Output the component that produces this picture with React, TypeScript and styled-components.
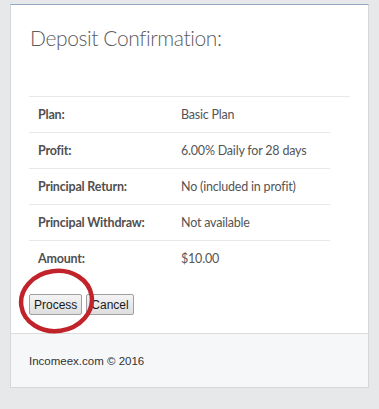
import React from 'react';
import styled, { createGlobalStyle } from 'styled-components';

const GlobalStyle = createGlobalStyle`
	html, body {
		margin: 0;
		padding: 0;
		background: #e7e8e9;
	}
`;

const rows = [
	{ label: 'Plan:', value: 'Basic Plan' },
	{ label: 'Profit:', value: '6.00% Daily for 28 days' },
	{ label: 'Principal Return:', value: 'No (included in profit)' },
	{ label: 'Principal Withdraw:', value: 'Not available' },
	{ label: 'Amount:', value: '$10.00' },
];

const App: React.FC = () => {
	return (
		<>
			<GlobalStyle />
			<Page>
				<Card>
					<CardBody>
						<Title>Deposit Confirmation:</Title>
						<Divider />
						<InfoTable>
							<tbody>
								{rows.map((row) => (
									<tr key={row.label}>
										<LabelCell>{row.label}</LabelCell>
										<ValueCell>{row.value}</ValueCell>
									</tr>
								))}
							</tbody>
						</InfoTable>
						<Actions>
							<Circle viewBox='0 0 77 66' width='77' height='66'>
								<ellipse
									cx='38.5'
									cy='33'
									rx='35.5'
									ry='30'
									fill='none'
									stroke='#c1232b'
									strokeWidth='4.5'
									transform='rotate(-8 38.5 33)'
								/>
							</Circle>
							<Button type='button'>Process</Button>
							<Button type='button'>Cancel</Button>
						</Actions>
					</CardBody>
					<Footer>Incomeex.com © 2016</Footer>
				</Card>
			</Page>
		</>
	);
};

export default App;

const Page = styled.div`
	padding: 4px 10px 22px;
`;

const Card = styled.section`
	background: #ffffff;
	border: 1px solid #d6d7d8;
	border-top-color: #93a9c0;
	font-family: Lato, 'Noto Sans', sans-serif;
`;

const CardBody = styled.div`
	padding: 19px 18px 18px;
`;

const Title = styled.h2`
	margin: 0 0 0 1px;
	font-size: 21px;
	font-weight: 300;
	letter-spacing: -0.4px;
	line-height: 28px;
	color: #5c5c5c;
`;

const Divider = styled.hr`
	margin: 44px 0 0;
	border: 0;
	border-top: 1px solid #e8e8e8;
`;

const InfoTable = styled.table`
	width: 301px;
	border-collapse: collapse;

	tr + tr td {
		border-top: 1px solid #e8e8e8;
	}
`;

const LabelCell = styled.td`
	width: 143px;
	height: 35px;
	padding: 0 0 0 9px;
	font-size: 12.5px;
	font-weight: 700;
	letter-spacing: -0.2px;
	color: #505050;
`;

const ValueCell = styled.td`
	padding: 0;
	font-size: 12.5px;
	letter-spacing: -0.2px;
	color: #555;
`;

const Actions = styled.div`
	position: relative;
	display: flex;
	gap: 4px;
	margin-top: 18px;
`;

const Circle = styled.svg`
	position: absolute;
	left: -11px;
	top: -26px;
	pointer-events: none;
`;

const Button = styled.button`
	height: 21px;
	padding: 0 4px;
	border: 1px solid #a0a0a0;
	border-radius: 2px;
	background: linear-gradient(#f4f4f4, #dedede);
	font-family: 'Liberation Sans', Arial, sans-serif;
	font-size: 12px;
	color: #1a1a1a;
`;

const Footer = styled.footer`
	padding: 19px 18px 18px;
	border-top: 1px solid #dcdcdc;
	background: #f6f7f8;
	font-family: 'Liberation Sans', Arial, sans-serif;
	font-size: 11.5px;
	line-height: 16px;
	color: #333;
`;
